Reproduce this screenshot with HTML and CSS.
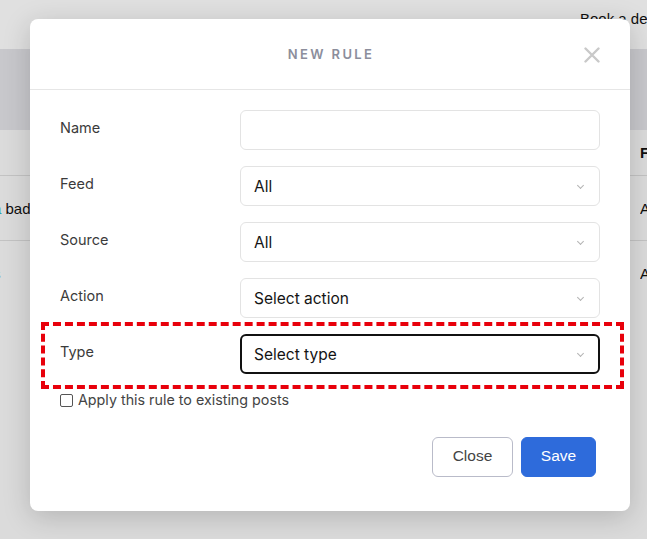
FILE: index.html
```html
<!DOCTYPE html>
<html lang="en">
<head>
    <meta charset="UTF-8">
    <meta name="viewport" content="width=device-width, initial-scale=1.0">
    <title>New rule</title>
    <link rel="stylesheet" href="styles.css">
</head>
<body>

    <!-- Page behind the modal -->
    <div class="page">
        <div class="topbar">
            <span class="demo">Book a demo</span>
        </div>
        <div class="band"></div>
        <div class="table">
            <div class="trow thead">
                <div class="cell-left"></div>
                <div class="cell-right">Feed</div>
            </div>
            <div class="trow">
                <div class="cell-left"><span class="teal">a</span> bad</div>
                <div class="cell-right">All</div>
            </div>
            <div class="trow last">
                <div class="cell-left">s</div>
                <div class="cell-right">All</div>
            </div>
        </div>
    </div>

    <div class="backdrop"></div>

    <!-- Modal -->
    <div class="modal">
        <div class="modal-header">
            <h2 class="modal-title">New rule</h2>
            <button class="close-x" aria-label="Close">
                <svg width="16" height="16" viewBox="0 0 16 16">
                    <path d="M1.5 1.5 L14.5 14.5 M14.5 1.5 L1.5 14.5" stroke="#c9c9c9" stroke-width="2.4" stroke-linecap="round" fill="none"/>
                </svg>
            </button>
        </div>

        <div class="modal-body">
            <div class="field">
                <label>Name</label>
                <div class="input"></div>
            </div>
            <div class="field">
                <label>Feed</label>
                <div class="input select">All <span class="chev"></span></div>
            </div>
            <div class="field">
                <label>Source</label>
                <div class="input select">All <span class="chev"></span></div>
            </div>
            <div class="field">
                <label>Action</label>
                <div class="input select">Select action <span class="chev"></span></div>
            </div>
            <div class="field highlight">
                <label>Type</label>
                <div class="input select focused">Select type <span class="chev"></span></div>
            </div>

            <label class="check">
                <span class="box"></span>
                Apply this rule to existing posts
            </label>
        </div>

        <div class="modal-footer">
            <button class="btn btn-light">Close</button>
            <button class="btn btn-primary">Save</button>
        </div>
    </div>

</body>
</html>
```

FILE: styles.css
```css
body {
    margin: 0;
    padding: 0;
    overflow: hidden;
    font-family: Inter, "Liberation Sans", sans-serif;
    background: #fff;
    height: 539px;
    position: relative;
}

/* Page behind */
.topbar {
    height: 49px;
    background: #ffffff;
    display: flex;
    justify-content: flex-end;
}

.demo {
    font-family: "Liberation Sans", Arial, sans-serif;
    font-size: 15px;
    color: #111;
    padding-top: 10px;
    width: 67px;
    white-space: nowrap;
    overflow: hidden;
}

.band {
    height: 81px;
    background: #e4e4e9;
}

.table {
    background: #fafafa;
    height: 409px;
}

.trow {
    display: flex;
    justify-content: space-between;
    border-bottom: 1px solid #dedede;
    height: 64px;
    align-items: center;
    font-family: "Liberation Sans", Arial, sans-serif;
    font-size: 15px;
    color: #111;
}

.trow.last {
    border-bottom: 0;
}

.thead {
    height: 45px;
    font-weight: bold;
}

.cell-left {
    text-indent: -7px;
    white-space: nowrap;
}

.teal {
    color: #2bb5c9;
}

.cell-right {
    width: 7px;
    overflow: hidden;
    white-space: nowrap;
}

.backdrop {
    position: absolute;
    inset: 0;
    background: rgba(0, 0, 0, 0.12);
}

/* Modal */
.modal {
    position: absolute;
    left: 30px;
    top: 19px;
    width: 600px;
    background: #fff;
    border-radius: 8px;
    box-shadow: 0 6px 28px rgba(0, 0, 0, 0.18);
}

.modal-header {
    height: 70px;
    border-bottom: 1px solid #e6e6e6;
    display: flex;
    align-items: center;
    justify-content: center;
    position: relative;
}

.modal-title {
    margin: 0;
    font-size: 13px;
    font-weight: 600;
    letter-spacing: 2.4px;
    text-transform: uppercase;
    color: #8c8e9c;
    padding-left: 2px;
}

.close-x {
    position: absolute;
    right: 30px;
    top: 28px;
    padding: 0;
    border: 0;
    background: none;
    line-height: 0;
}

.modal-body {
    padding: 20px 30px 0 30px;
    display: flex;
    flex-direction: column;
    gap: 16px;
}

.field {
    display: grid;
    grid-template-columns: 180px 1fr;
    align-items: center;
    position: relative;
}

.field label {
    font-size: 14.5px;
    color: #3b3b3b;
    margin-top: -5px;
}

.input {
    height: 40px;
    box-sizing: border-box;
    border: 1px solid #e3e3e3;
    border-radius: 6px;
    display: flex;
    align-items: center;
    padding: 0 13px;
    font-size: 15.5px;
    color: #141414;
    position: relative;
}

.input.focused {
    border: 2px solid #111;
    padding: 0 12px;
}

.chev {
    position: absolute;
    right: 16px;
    top: 16px;
    width: 4px;
    height: 4px;
    border-right: 1px solid #b3b3b3;
    border-bottom: 1px solid #b3b3b3;
    transform: rotate(45deg);
}

.focused .chev {
    right: 15px;
    top: 15px;
}

/* Red dashed annotation around the Type row */
.highlight::after {
    content: "";
    position: absolute;
    left: -19px;
    right: -24px;
    top: -12px;
    bottom: -15px;
    border: 4px dashed #e8000b;
    pointer-events: none;
}

.check {
    display: flex;
    align-items: center;
    gap: 5px;
    font-size: 14.3px;
    color: #444;
    margin-top: 1px;
    line-height: 18px;
}

.check .box {
    width: 11px;
    height: 11px;
    border: 1px solid #555;
    border-radius: 2px;
    background: #fff;
}

.modal-footer {
    display: flex;
    justify-content: flex-end;
    gap: 8px;
    padding: 28px 34px 34px 0;
}

.btn {
    height: 40px;
    border-radius: 6px;
    font-family: "Liberation Sans", Arial, sans-serif;
    font-size: 15.5px;
    padding: 0 0 2px 0;
    cursor: pointer;
}

.btn-light {
    width: 81px;
    background: #fff;
    border: 1px solid #b9bbc9;
    color: #444;
}

.btn-primary {
    width: 75px;
    background: #2e6bdb;
    border: 1px solid #2e6bdb;
    color: #fff;
}
```
